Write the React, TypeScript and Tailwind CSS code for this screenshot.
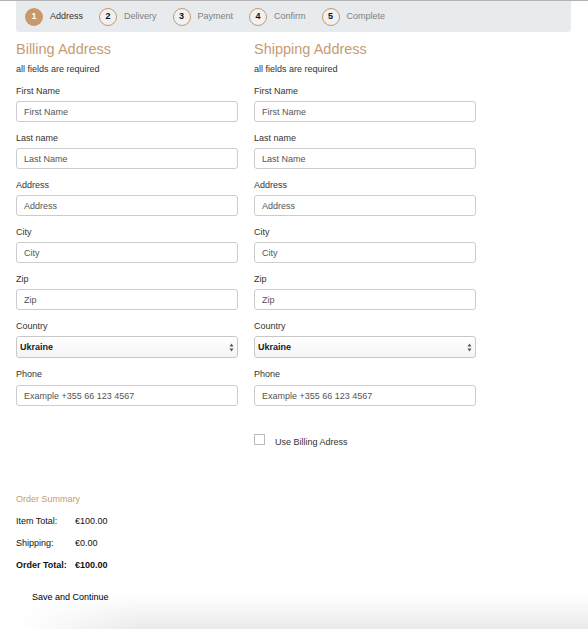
import { useState } from 'react';

const steps = ['Address', 'Delivery', 'Payment', 'Confirm', 'Complete'];

const fields = [
  { label: 'First Name', ph: 'First Name' },
  { label: 'Last name', ph: 'Last Name' },
  { label: 'Address', ph: 'Address' },
  { label: 'City', ph: 'City' },
  { label: 'Zip', ph: 'Zip' },
];

function AddressForm({ title }: { title: string }) {
  return (
    <div className="w-[222px]">
      <h2 className="text-[14.5px] leading-[18px] text-[#c69c72] mt-[8px]">{title}</h2>
      <p className="text-[9px] leading-[12px] text-[#333] mt-[5px]">all fields are required</p>

      {fields.map((f) => (
        <div key={f.label} className="mt-[9px]">
          <label className="block text-[9px] leading-[12px] text-[#333] translate-y-[1px]">{f.label}</label>
          <input
            placeholder={f.ph}
            className="block mt-[5px] w-full h-[21px] border border-[#ccc] rounded-[3px] px-[7px] text-[9px] text-[#555] placeholder:text-[#555] outline-none"
          />
        </div>
      ))}

      <div className="mt-[9px]">
        <label className="block text-[9px] leading-[12px] text-[#333] translate-y-[1px]">Country</label>
        <div className="mt-[5px] relative">
          <select className="block appearance-none w-full h-[22px] py-0 leading-[20px] border border-[#c8c8c8] rounded-[3px] pl-[3px] text-[9px] font-bold text-[#222] bg-gradient-to-b from-white to-[#f4f4f4] outline-none">
            <option>Ukraine</option>
          </select>
          <svg
            className="absolute right-[4px] top-[7px] pointer-events-none"
            width="5"
            height="9"
            viewBox="0 0 5 9"
          >
            <path d="M2.5 0.5 L4.5 3.5 H0.5 Z" fill="#555" />
            <path d="M2.5 8.5 L4.5 5.5 H0.5 Z" fill="#555" />
          </svg>
        </div>
      </div>

      <div className="mt-[9px]">
        <label className="block text-[9px] leading-[12px] text-[#333] translate-y-[1px]">Phone</label>
        <input
          placeholder="Example +355 66 123 4567"
          className="block mt-[6px] w-full h-[21px] border border-[#ccc] rounded-[3px] px-[7px] text-[9px] text-[#555] placeholder:text-[#555] outline-none"
        />
      </div>
    </div>
  );
}

export default function App() {
  const [useBilling, setUseBilling] = useState(false);

  return (
    <div className="w-[588px] min-h-[629px] bg-white border-t border-[#b4b4b4] font-['Liberation_Sans',Arial,sans-serif] flex flex-col">
      <div className="px-[16px]">
        {/* Stepper */}
        <div className="w-[555px] h-[31px] bg-[#e8ebee] rounded-b-[3px] flex items-center pl-[9px] gap-[16px]">
          {steps.map((s, i) => (
            <div key={s} className="flex items-center gap-[7px]">
              <span
                className={`w-[18px] h-[18px] rounded-full flex items-center justify-center text-[9px] font-bold ${
                  i === 0
                    ? 'bg-[#c8976a] text-white'
                    : 'border border-[#c8976a] bg-[#eff1f3] text-[#111]'
                }`}
              >
                {i + 1}
              </span>
              <span className={`text-[9px] ${i === 0 ? 'text-[#333]' : 'text-[#808080]'}`}>{s}</span>
            </div>
          ))}
        </div>

        <div className="flex gap-[16px]">
          <AddressForm title="Billing Address" />
          <div>
            <AddressForm title="Shipping Address" />
            <label className="flex items-center mt-[25px] cursor-pointer">
              <input
                type="checkbox"
                checked={useBilling}
                onChange={() => setUseBilling(!useBilling)}
                className="appearance-none w-[11px] h-[11px] border border-[#bbb] bg-white checked:bg-[#c8976a]"
              />
              <span className="ml-[10px] mt-[5px] text-[9px] leading-[12px] text-[#333]">Use Billing Adress</span>
            </label>
          </div>
        </div>

        {/* Order summary */}
        <div className="mt-[45px]">
          <h3 className="text-[9px] leading-[12px] text-[#c69c72]">Order Summary</h3>
          <div className="mt-[10px] flex flex-col gap-[10px] text-[9px] leading-[12px] text-[#111]">
            <div className="flex">
              <span className="w-[59px]">Item Total:</span>
              <span>€100.00</span>
            </div>
            <div className="flex">
              <span className="w-[59px]">Shipping:</span>
              <span>€0.00</span>
            </div>
            <div className="flex font-bold">
              <span className="w-[59px]">Order Total:</span>
              <span>€100.00</span>
            </div>
          </div>
        </div>
      </div>

      <div className="flex-1 mt-[12px] min-h-[45px] bg-[linear-gradient(to_right,white_20px,transparent_140px),linear-gradient(to_bottom,white_25%,#eaeaea)]">
        <button className="ml-[32px] text-[9px] leading-[12px] text-black">Save and Continue</button>
      </div>
    </div>
  );
}
